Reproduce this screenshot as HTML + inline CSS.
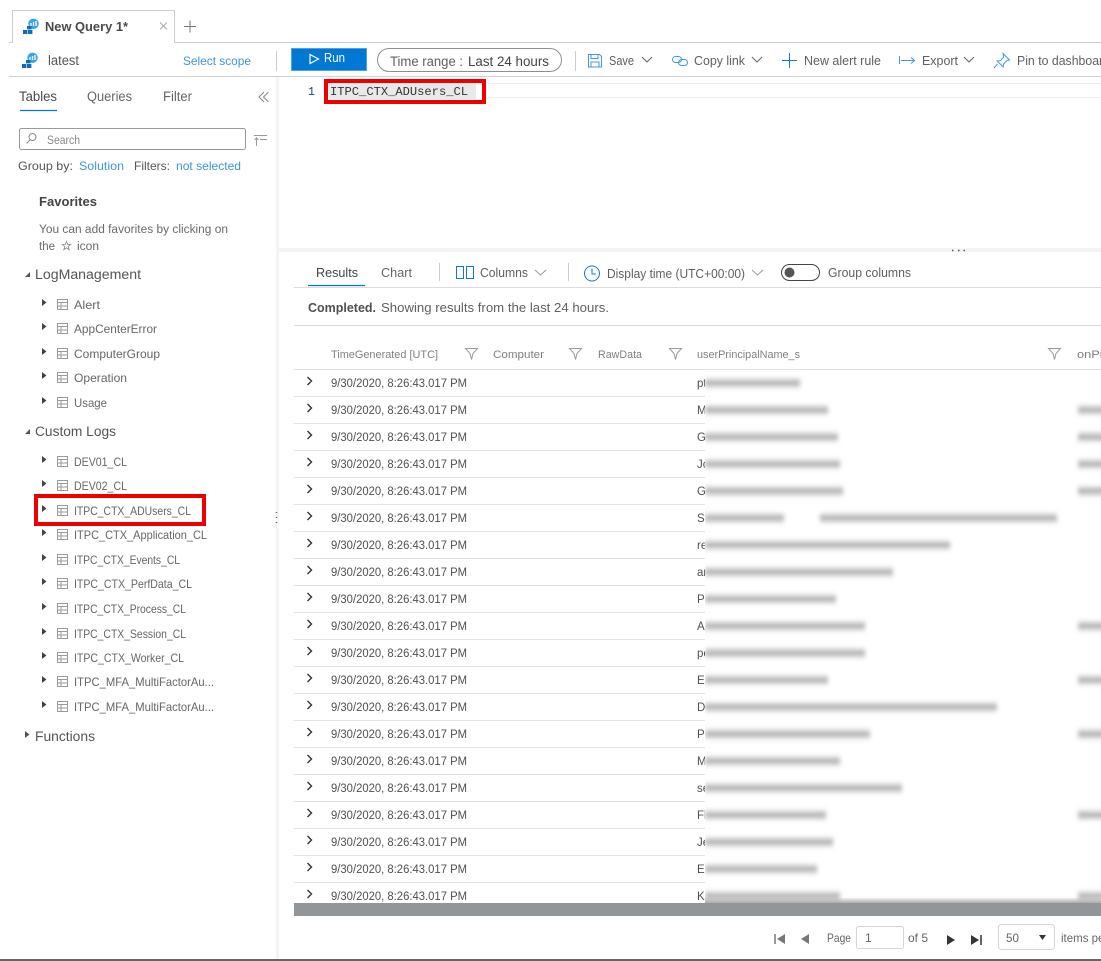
<!DOCTYPE html>
<html lang="en"><head><meta charset="utf-8"><title>New Query 1*</title>
<style>
html,body{margin:0;padding:0;background:#fff;width:1101px;height:961px;overflow:hidden}
svg{display:block}
text{font-family:"Liberation Sans",sans-serif;font-size:12px;fill:#505050}
.t{font-size:12.500px;fill:#606060}
.h{font-size:13.500px;fill:#555}
.b{fill:#0f7bd0}
.d{font-size:11.500px;fill:#505050}
.c{font-size:11px;fill:#808080}
.i{fill:none;stroke:#0f7bd0;stroke-width:1}
.g{fill:none;stroke:#666;stroke-width:1}
.l{stroke:#e3e3e3;stroke-width:1}
.bl{filter:blur(2px)}
.bl rect{fill:url(#bar);height:16px}
.s{font-size:12px;fill:#666}
</style></head><body>
<svg width="1101" height="961" viewBox="0 0 1101 961" xmlns="http://www.w3.org/2000/svg">
<defs>
<linearGradient id="bar" x1="0" y1="0" x2="0" y2="1"><stop offset="0" stop-color="#fff" stop-opacity="0"/><stop offset=".3" stop-color="#b8b8b8" stop-opacity=".55"/><stop offset=".5" stop-color="#a6a6a6"/><stop offset=".7" stop-color="#b8b8b8" stop-opacity=".55"/><stop offset="1" stop-color="#fff" stop-opacity="0"/></linearGradient>
<clipPath id="cb"><rect x="705" y="370" width="396" height="533"/></clipPath>
<clipPath id="cw"><rect x="0" y="0" width="1101" height="903"/></clipPath>
<linearGradient id="sh" x1="0" y1="0" x2="0" y2="1"><stop offset="0" stop-color="#939698" stop-opacity="0"/><stop offset="1" stop-color="#939698" stop-opacity=".8"/></linearGradient>
<symbol id="logo" viewBox="0 0 16 15" overflow="visible">
<circle cx="10.500" cy="4.800" r="5.200" fill="#38a4e4"/><path d="M8 4v3M10.500 3v4M13 2v5" stroke="#fff" stroke-width="1.300"/>
<path d="M4 7h4.500v3.400H4zM0 11h4.400v4H0zM5 11h4.400v4H5z" fill="#0f6cbd"/>
</symbol>
<symbol id="tb" viewBox="0 0 11 11" overflow="visible"><path d="M.5.500h10v10H.500zM.5 3.500h10M.5 7h10M4 3.500v7" fill="none" stroke="#9a9a9a" stroke-width="1"/></symbol>
<symbol id="fl" viewBox="0 0 13 12" overflow="visible"><path d="M.5.500h12L8 5.500 6.500 11.500 5 5.500z" fill="none" stroke="#999" stroke-width="1"/></symbol>
</defs>

<!-- tabs -->
<path d="M9 42.500H12.500V10.500H174.500V42.500H1101" fill="none" stroke="#cfcfcf"/>
<rect x="13" y="11" width="161" height="32" fill="#fff"/>
<use href="#logo" x="23" y="19" width="16" height="15"/>
<text x="45" y="31" font-weight="700" style="font-size:13px;fill:#4a4a4a" lengthAdjust="spacingAndGlyphs" textLength="83">New Query 1*</text>
<path d="M160 22.500l7 7M167 22.500l-7 7" stroke="#aaa" fill="none"/>
<path d="M190 20.500v12M184 26.500h12" stroke="#777" fill="none"/>

<!-- toolbar -->
<use href="#logo" x="22" y="53" width="16" height="15"/>
<text x="48" y="65" class="h" lengthAdjust="spacingAndGlyphs" textLength="31">latest</text>
<text x="183" y="65" class="b" lengthAdjust="spacingAndGlyphs" textLength="68" style="fill:#3f95d8">Select scope</text>
<path d="M276.500 51v20" stroke="#ccc"/>
<rect x="291" y="48" width="76" height="23" fill="#0078d4"/>
<rect x="291.500" y="48.500" width="75" height="22" fill="none" stroke="#9ccbee" stroke-dasharray="1 1"/>
<path d="M310 54.500l8.500 4.500-8.500 4.500z" fill="none" stroke="#fff" stroke-width="1.200"/>
<text x="324" y="62" lengthAdjust="spacingAndGlyphs" textLength="21" style="fill:#fff;font-size:12.500px">Run</text>
<rect x="377.500" y="48.500" width="184" height="23" rx="11.500" fill="#fff" stroke="#8f8f8f"/>
<text x="390" y="66" class="h" lengthAdjust="spacingAndGlyphs" textLength="73" style="fill:#606060">Time range :</text>
<text x="468" y="66" class="h" lengthAdjust="spacingAndGlyphs" textLength="81" style="fill:#444">Last 24 hours</text>
<path d="M575.500 51v20" stroke="#ccc"/>
<path class="i" d="M588.500 54.500h11l2 2v10.500h-13zM591 54.500v4h7v-4M591 67v-5h8v5" style="stroke:#3e9be0"/>
<text x="609" y="65" class="t" lengthAdjust="spacingAndGlyphs" textLength="25">Save</text>
<path class="g" d="M642 57l5 5 5-5"/>
<g class="i" style="stroke:#3e9be0"><rect x="672.500" y="56.500" width="9" height="6" rx="3"/><rect x="678.500" y="59.500" width="9" height="6" rx="3"/></g>
<text x="694" y="65" class="t" lengthAdjust="spacingAndGlyphs" textLength="51">Copy link</text>
<path class="g" d="M752 57l5 5 5-5"/>
<path class="i" d="M789.500 53v15M782 60.500h15"/>
<text x="804" y="65" class="t" lengthAdjust="spacingAndGlyphs" textLength="77">New alert rule</text>
<path class="i" d="M899.500 56v8M901 60.500h13M911 57.500l3.500 3-3.500 3" style="stroke:#3e9be0"/>
<text x="922" y="65" class="t" lengthAdjust="spacingAndGlyphs" textLength="36">Export</text>
<path class="g" d="M964 57l5 5 5-5"/>
<path class="i" d="M1003 53.500l6.500 6.500-2.500.5-3.500 3.500-.3 3-6-6 3-.3 3.500-3.500zM997.500 64l-3.500 4" style="stroke:#3e9be0"/>
<text x="1017" y="65" class="t" lengthAdjust="spacingAndGlyphs" textLength="93">Pin to dashboard</text>
<path d="M9 76.500H1101" stroke="#cfcfcf"/>

<!-- left panel -->
<rect x="276" y="77" width="3" height="884" fill="#f4f4f4"/>
<text x="19" y="101" class="h" lengthAdjust="spacingAndGlyphs" textLength="38" style="fill:#4a4a4a">Tables</text>
<text x="87" y="101" class="h" lengthAdjust="spacingAndGlyphs" textLength="45" style="fill:#666">Queries</text>
<text x="163" y="101" class="h" lengthAdjust="spacingAndGlyphs" textLength="29" style="fill:#666">Filter</text>
<path d="M20 110.500h37" stroke="#0078d4" stroke-width="1.200"/>
<path d="M264 92l-5 5 5 5M268.500 92l-5 5 5 5" fill="none" stroke="#888"/>
<rect x="19.500" y="128.500" width="226" height="21" rx="2" fill="#fff" stroke="#999"/>
<circle cx="32.500" cy="137" r="3.500" fill="none" stroke="#888"/><path d="M30 140l-3.500 3.500" stroke="#888"/>
<text x="47" y="144" lengthAdjust="spacingAndGlyphs" textLength="33" style="font-size:11.500px;fill:#888">Search</text>
<path d="M254 135.500h13M260 139.500h7M256.500 146v-8l-2 2M256.500 138l2 2" fill="none" stroke="#999"/>
<text x="18" y="170" lengthAdjust="spacingAndGlyphs" textLength="55" style="fill:#555">Group by:</text>
<text x="79" y="170" class="b" lengthAdjust="spacingAndGlyphs" textLength="45" style="fill:#3f95d8">Solution</text>
<text x="134" y="170" lengthAdjust="spacingAndGlyphs" textLength="36" style="fill:#555">Filters:</text>
<text x="176" y="170" class="b" lengthAdjust="spacingAndGlyphs" textLength="65" style="fill:#3f95d8">not selected</text>
<text x="39" y="206" font-weight="700" lengthAdjust="spacingAndGlyphs" textLength="58" style="fill:#444;font-size:13px">Favorites</text>
<text x="39" y="233" lengthAdjust="spacingAndGlyphs" textLength="189" style="font-size:11.500px;fill:#6a6a6a">You can add favorites by clicking on</text>
<text x="39" y="250" lengthAdjust="spacingAndGlyphs" textLength="16" style="font-size:11.500px;fill:#6a6a6a">the</text>
<path d="M66.500 241.500l1.200 3h3l-2.500 2 1 3.200-2.700-1.900-2.700 1.900 1-3.200-2.500-2h3z" fill="none" stroke="#888" stroke-width=".8"/>
<text x="77" y="250" lengthAdjust="spacingAndGlyphs" textLength="22" style="font-size:11.500px;fill:#6a6a6a">icon</text>

<path d="M30 272v5h-5z" fill="#555"/>
<text x="35" y="279" class="h" lengthAdjust="spacingAndGlyphs" textLength="106">LogManagement</text>
<path d="M30 429v5h-5z" fill="#555"/>
<text x="35" y="436" class="h" lengthAdjust="spacingAndGlyphs" textLength="81">Custom Logs</text>
<path d="M25 731l4.500 3.500-4.500 3.500z" fill="#555"/>
<text x="35" y="741" class="h" lengthAdjust="spacingAndGlyphs" textLength="60">Functions</text>

<path d="M42 299l4.500 3.500-4.500 3.500zM42 323l4.500 3.500-4.500 3.500zM42 348l4.500 3.500-4.500 3.500zM42 372l4.500 3.500-4.500 3.500zM42 397l4.500 3.500-4.500 3.500zM42 456l4.500 3.500-4.500 3.500zM42 480l4.500 3.500-4.500 3.500zM42 505l4.500 3.500-4.500 3.500zM42 529l4.500 3.500-4.500 3.500zM42 554l4.500 3.500-4.500 3.500zM42 578l4.500 3.500-4.500 3.500zM42 603l4.500 3.500-4.500 3.500zM42 628l4.500 3.500-4.500 3.500zM42 652l4.500 3.500-4.500 3.500zM42 676l4.500 3.500-4.500 3.500zM42 701l4.500 3.500-4.500 3.500z" fill="#444"/>
<use href="#tb" x="57" y="299" width="11" height="11"/><use href="#tb" x="57" y="323" width="11" height="11"/><use href="#tb" x="57" y="348" width="11" height="11"/><use href="#tb" x="57" y="372" width="11" height="11"/><use href="#tb" x="57" y="397" width="11" height="11"/>
<use href="#tb" x="57" y="456" width="11" height="11"/><use href="#tb" x="57" y="480" width="11" height="11"/><use href="#tb" x="57" y="505" width="11" height="11"/><use href="#tb" x="57" y="529" width="11" height="11"/><use href="#tb" x="57" y="554" width="11" height="11"/><use href="#tb" x="57" y="578" width="11" height="11"/><use href="#tb" x="57" y="603" width="11" height="11"/><use href="#tb" x="57" y="628" width="11" height="11"/><use href="#tb" x="57" y="652" width="11" height="11"/><use href="#tb" x="57" y="676" width="11" height="11"/><use href="#tb" x="57" y="701" width="11" height="11"/>
<text x="74" y="309" class="s" lengthAdjust="spacingAndGlyphs" textLength="26">Alert</text>
<text x="74" y="333" class="s" lengthAdjust="spacingAndGlyphs" textLength="83">AppCenterError</text>
<text x="74" y="358" class="s" lengthAdjust="spacingAndGlyphs" textLength="86">ComputerGroup</text>
<text x="74" y="382" class="s" lengthAdjust="spacingAndGlyphs" textLength="53">Operation</text>
<text x="74" y="407" class="s" lengthAdjust="spacingAndGlyphs" textLength="33">Usage</text>
<text x="74" y="466" class="s" lengthAdjust="spacingAndGlyphs" textLength="53">DEV01_CL</text>
<text x="74" y="490" class="s" lengthAdjust="spacingAndGlyphs" textLength="53">DEV02_CL</text>
<text x="74" y="515" class="s" lengthAdjust="spacingAndGlyphs" textLength="117">ITPC_CTX_ADUsers_CL</text>
<text x="74" y="539" class="s" lengthAdjust="spacingAndGlyphs" textLength="133">ITPC_CTX_Application_CL</text>
<text x="74" y="564" class="s" lengthAdjust="spacingAndGlyphs" textLength="106">ITPC_CTX_Events_CL</text>
<text x="74" y="588" class="s" lengthAdjust="spacingAndGlyphs" textLength="118">ITPC_CTX_PerfData_CL</text>
<text x="74" y="613" class="s" lengthAdjust="spacingAndGlyphs" textLength="112">ITPC_CTX_Process_CL</text>
<text x="74" y="638" class="s" lengthAdjust="spacingAndGlyphs" textLength="112">ITPC_CTX_Session_CL</text>
<text x="74" y="662" class="s" lengthAdjust="spacingAndGlyphs" textLength="110">ITPC_CTX_Worker_CL</text>
<text x="74" y="686" class="s" lengthAdjust="spacingAndGlyphs" textLength="140">ITPC_MFA_MultiFactorAu...</text>
<text x="74" y="711" class="s" lengthAdjust="spacingAndGlyphs" textLength="140">ITPC_MFA_MultiFactorAu...</text>
<rect x="36" y="496" width="168" height="28" fill="none" stroke="#ee0000" stroke-width="4"/>
<path d="M276.500 512v1M276.500 517v1M276.500 522v1" stroke="#666" stroke-width="1.500"/>

<!-- editor -->
<path d="M486 83.500H1101M486 97.500H1101" stroke="#efefef"/>
<rect x="329" y="83" width="147" height="16" fill="#e9e9e9"/>
<text x="308" y="95" style="font-family:'Liberation Mono',monospace;font-size:11.500px;fill:#1b3f7c">1</text>
<text x="330" y="95" lengthAdjust="spacingAndGlyphs" textLength="138" style="font-family:'Liberation Mono',monospace;font-size:12px;fill:#333">ITPC_CTX_ADUsers_CL</text>
<rect x="326" y="81" width="158" height="21" fill="none" stroke="#ee0000" stroke-width="4"/>

<!-- results -->
<rect x="279" y="248" width="822" height="4" fill="#f4f4f4"/>
<path d="M952 250.500h1.500M958 250.500h1.500M963.500 250.500h1.500" stroke="#555" stroke-width="1.500"/>
<text x="316" y="277" lengthAdjust="spacingAndGlyphs" textLength="42" style="fill:#444;font-size:13px">Results</text>
<text x="381" y="277" lengthAdjust="spacingAndGlyphs" textLength="31" style="fill:#666;font-size:13px">Chart</text>
<path d="M308 285.500h57" stroke="#0078d4" stroke-width="1.200"/>
<path d="M439.500 263v18M568.500 263v18" stroke="#ccc"/>
<path class="i" d="M456.500 266.500h7v12h-7zM466.500 266.500h7v12h-7z"/>
<text x="480" y="277" class="t" lengthAdjust="spacingAndGlyphs" textLength="48">Columns</text>
<path d="M535 270l5.500 5 5.500-5" fill="none" stroke="#999"/>
<circle cx="592" cy="273.500" r="7.500" class="i"/><path class="i" d="M592 268.500v5.500h4"/>
<text x="607" y="278" class="t" lengthAdjust="spacingAndGlyphs" textLength="138">Display time (UTC+00:00)</text>
<path d="M752 270l5.500 5 5.500-5" fill="none" stroke="#999"/>
<rect x="781.500" y="264.500" width="38" height="16" rx="8" fill="#fff" stroke="#444"/>
<circle cx="789.500" cy="272.500" r="5" fill="#555"/>
<text x="828" y="277" class="t" lengthAdjust="spacingAndGlyphs" textLength="83">Group columns</text>
<path d="M294 287.500H1101M294 325.500H1101" stroke="#dcdcdc"/>
<text x="308" y="312" font-weight="700" lengthAdjust="spacingAndGlyphs" textLength="68" style="fill:#505050;font-size:12.500px">Completed.</text>
<text x="381" y="312" class="t" lengthAdjust="spacingAndGlyphs" textLength="228">Showing results from the last 24 hours.</text>

<text x="331" y="358" class="c" lengthAdjust="spacingAndGlyphs" textLength="107">TimeGenerated [UTC]</text>
<use href="#fl" x="465" y="348" width="13" height="12"/>
<text x="493" y="358" class="c" lengthAdjust="spacingAndGlyphs" textLength="51">Computer</text>
<use href="#fl" x="569" y="348" width="13" height="12"/>
<text x="598" y="358" class="c" lengthAdjust="spacingAndGlyphs" textLength="44">RawData</text>
<use href="#fl" x="669" y="348" width="13" height="12"/>
<text x="697" y="358" class="c" lengthAdjust="spacingAndGlyphs" textLength="103">userPrincipalName_s</text>
<use href="#fl" x="1048" y="348" width="13" height="12"/>
<text x="1077" y="358" class="c" lengthAdjust="spacingAndGlyphs" textLength="27">onPr</text>

<g clip-path="url(#cw)">
<path class="l" d="M294 369.500H1101M294 396.500H705M294 423.500H705M294 450.500H705M294 477.500H705M294 504.500H705M294 531.500H705M294 558.500H705M294 585.500H705M294 612.500H705M294 639.500H705M294 666.500H705M294 693.500H705M294 720.500H705M294 747.500H705M294 774.500H705M294 801.500H705M294 828.500H705M294 855.500H705M294 882.500H705"/>
<path d="M307.500 377l4 4-4 4M307.500 404l4 4-4 4M307.500 431l4 4-4 4M307.500 458l4 4-4 4M307.500 485l4 4-4 4M307.500 512l4 4-4 4M307.500 539l4 4-4 4M307.500 566l4 4-4 4M307.500 593l4 4-4 4M307.500 620l4 4-4 4M307.500 647l4 4-4 4M307.500 674l4 4-4 4M307.500 701l4 4-4 4M307.500 728l4 4-4 4M307.500 755l4 4-4 4M307.500 782l4 4-4 4M307.500 809l4 4-4 4M307.500 836l4 4-4 4M307.500 863l4 4-4 4M307.500 890l4 4-4 4" fill="none" stroke="#333" stroke-width="1.400"/>
<text x="331" y="387" class="d" lengthAdjust="spacingAndGlyphs" textLength="136">9/30/2020, 8:26:43.017 PM</text>
<text x="331" y="414" class="d" lengthAdjust="spacingAndGlyphs" textLength="136">9/30/2020, 8:26:43.017 PM</text>
<text x="331" y="441" class="d" lengthAdjust="spacingAndGlyphs" textLength="136">9/30/2020, 8:26:43.017 PM</text>
<text x="331" y="468" class="d" lengthAdjust="spacingAndGlyphs" textLength="136">9/30/2020, 8:26:43.017 PM</text>
<text x="331" y="495" class="d" lengthAdjust="spacingAndGlyphs" textLength="136">9/30/2020, 8:26:43.017 PM</text>
<text x="331" y="522" class="d" lengthAdjust="spacingAndGlyphs" textLength="136">9/30/2020, 8:26:43.017 PM</text>
<text x="331" y="549" class="d" lengthAdjust="spacingAndGlyphs" textLength="136">9/30/2020, 8:26:43.017 PM</text>
<text x="331" y="576" class="d" lengthAdjust="spacingAndGlyphs" textLength="136">9/30/2020, 8:26:43.017 PM</text>
<text x="331" y="603" class="d" lengthAdjust="spacingAndGlyphs" textLength="136">9/30/2020, 8:26:43.017 PM</text>
<text x="331" y="630" class="d" lengthAdjust="spacingAndGlyphs" textLength="136">9/30/2020, 8:26:43.017 PM</text>
<text x="331" y="657" class="d" lengthAdjust="spacingAndGlyphs" textLength="136">9/30/2020, 8:26:43.017 PM</text>
<text x="331" y="684" class="d" lengthAdjust="spacingAndGlyphs" textLength="136">9/30/2020, 8:26:43.017 PM</text>
<text x="331" y="711" class="d" lengthAdjust="spacingAndGlyphs" textLength="136">9/30/2020, 8:26:43.017 PM</text>
<text x="331" y="738" class="d" lengthAdjust="spacingAndGlyphs" textLength="136">9/30/2020, 8:26:43.017 PM</text>
<text x="331" y="765" class="d" lengthAdjust="spacingAndGlyphs" textLength="136">9/30/2020, 8:26:43.017 PM</text>
<text x="331" y="792" class="d" lengthAdjust="spacingAndGlyphs" textLength="136">9/30/2020, 8:26:43.017 PM</text>
<text x="331" y="819" class="d" lengthAdjust="spacingAndGlyphs" textLength="136">9/30/2020, 8:26:43.017 PM</text>
<text x="331" y="846" class="d" lengthAdjust="spacingAndGlyphs" textLength="136">9/30/2020, 8:26:43.017 PM</text>
<text x="331" y="873" class="d" lengthAdjust="spacingAndGlyphs" textLength="136">9/30/2020, 8:26:43.017 PM</text>
<text x="331" y="900" class="d" lengthAdjust="spacingAndGlyphs" textLength="136">9/30/2020, 8:26:43.017 PM</text>
<text x="697" y="387" class="d">pt</text><text x="697" y="414" class="d">M</text><text x="697" y="441" class="d">G</text><text x="697" y="468" class="d">Jo</text><text x="697" y="495" class="d">G</text><text x="697" y="522" class="d">Sy</text><text x="697" y="549" class="d">re</text><text x="697" y="576" class="d">ar</text><text x="697" y="603" class="d">Pe</text><text x="697" y="630" class="d">A</text><text x="697" y="657" class="d">pe</text><text x="697" y="684" class="d">Er</text><text x="697" y="711" class="d">D</text><text x="697" y="738" class="d">Pa</text><text x="697" y="765" class="d">M</text><text x="697" y="792" class="d">se</text><text x="697" y="819" class="d">Fl</text><text x="697" y="846" class="d">Je</text><text x="697" y="873" class="d">Er</text><text x="697" y="900" class="d">Ka</text>
</g>
<rect x="705" y="370" width="396" height="533" fill="#fff"/>
<g clip-path="url(#cb)"><g class="bl">
<rect x="705" y="375" width="95" height="16"/>
<rect x="705" y="402" width="123" height="16"/>
<rect x="705" y="429" width="133" height="16"/>
<rect x="705" y="456" width="135" height="16"/>
<rect x="705" y="483" width="138" height="16"/>
<rect x="705" y="510" width="79" height="16"/><rect x="820" y="510" width="237" height="16"/>
<rect x="705" y="537" width="245" height="16"/>
<rect x="705" y="564" width="188" height="16"/>
<rect x="705" y="591" width="131" height="16"/>
<rect x="705" y="618" width="160" height="16"/>
<rect x="705" y="645" width="160" height="16"/>
<rect x="705" y="672" width="123" height="16"/>
<rect x="705" y="699" width="292" height="16"/>
<rect x="705" y="726" width="165" height="16"/>
<rect x="705" y="753" width="135" height="16"/>
<rect x="705" y="780" width="197" height="16"/>
<rect x="705" y="807" width="121" height="16"/>
<rect x="705" y="834" width="128" height="16"/>
<rect x="705" y="861" width="112" height="16"/>
<rect x="705" y="888" width="135" height="16"/>
<rect x="1078" y="402" width="30" height="16"/><rect x="1078" y="429" width="30" height="16"/><rect x="1078" y="456" width="30" height="16"/><rect x="1078" y="483" width="30" height="16"/><rect x="1078" y="618" width="30" height="16"/><rect x="1078" y="672" width="30" height="16"/><rect x="1078" y="726" width="30" height="16"/><rect x="1078" y="807" width="30" height="16"/><rect x="1078" y="888" width="30" height="16"/>
</g></g>
<rect x="705" y="897" width="396" height="6" fill="url(#sh)"/>
<rect x="294" y="903" width="807" height="13" fill="#939698"/>

<!-- pager -->
<path d="M775 934v10" stroke="#777" stroke-width="1.500"/><path d="M785 934v10l-8-5z" fill="#777"/>
<path d="M809 934v10l-8-5z" fill="#777"/>
<text x="827" y="942" class="s" lengthAdjust="spacingAndGlyphs" textLength="24">Page</text>
<rect x="856.500" y="926.500" width="47" height="22" rx="2" fill="#fff" stroke="#d4d4d4"/>
<text x="865" y="942" class="s">1</text>
<text x="908" y="942" class="s" lengthAdjust="spacingAndGlyphs" textLength="20">of 5</text>
<path d="M947 935v10l8-5z" fill="#333"/>
<path d="M971 935v10l8-5z" fill="#333"/><path d="M981 935v10" stroke="#333" stroke-width="1.500"/>
<rect x="998.500" y="924.500" width="56" height="25" rx="3" fill="#fff" stroke="#d4d4d4"/>
<text x="1006" y="942" class="s" lengthAdjust="spacingAndGlyphs" textLength="13">50</text>
<path d="M1039 935h7l-3.500 5z" fill="#333"/>
<text x="1061" y="942" class="s" lengthAdjust="spacingAndGlyphs" textLength="76">items per page</text>
<rect x="0" y="959" width="1101" height="2" fill="#666"/>
</svg>
</body></html>
